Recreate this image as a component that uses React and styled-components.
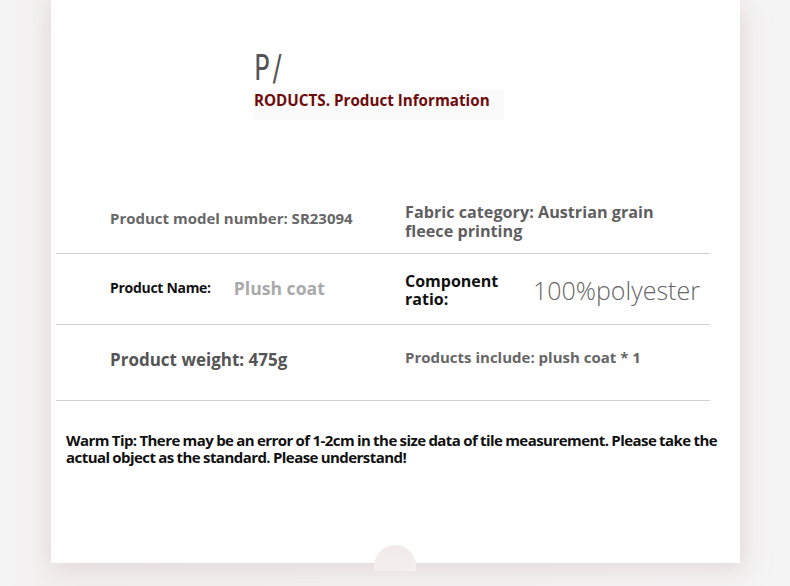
import React from "react";
import styled, { createGlobalStyle } from "styled-components";

const Global = createGlobalStyle`
  html, body { margin: 0; padding: 0; }
  body {
    background: #f4f3f3;
    font-family: "Open Sans", "Liberation Sans", sans-serif;
    width: 790px; height: 586px; overflow: hidden;
  }
`;

const Stage = styled.div`
  width: 790px;
  height: 586px;
  padding-left: 51px;
  box-sizing: border-box;
  background: linear-gradient(90deg, #f4f4f4 0%, #f2efef 6%, #f4f4f4 100%);
`;

const Card = styled.div`
  position: relative;
  width: 689px;
  height: 563px;
  background: #fff;
  box-shadow: 6px 8px 22px rgba(215, 190, 190, 0.35), -4px 0 14px rgba(220, 210, 210, 0.3);
  display: flex;
  flex-direction: column;
  box-sizing: border-box;
  padding-top: 49px;
`;

const Heading = styled.div`
  margin-left: 203px;
  display: flex;
  flex-direction: column;
`;

const Letter = styled.div`
  font-family: "DejaVu Sans Condensed", "Liberation Sans Narrow", sans-serif;
  font-size: 35px;
  line-height: 38px;
  color: #555;
  transform: scaleX(0.82);
  transform-origin: left;
  letter-spacing: 4px;
`;

const Sub = styled.div`
  margin-top: 3px;
  font-weight: 700;
  font-size: 15.2px;
  line-height: 20px;
  color: #6e0b0b;
  background: #fbfafa;
  padding: 0 14px 10px 0;
  align-self: flex-start;
`;

const Table = styled.div`
  margin: 71px 0 0 5px;
  width: 654px;
  display: flex;
  flex-direction: column;
`;

const Row = styled.div`
  box-sizing: border-box;
  display: grid;
  grid-template-columns: 349px 1fr;
  align-items: center;
  height: ${p => p.$h}px;
  border-bottom: 1px solid #d2d2d2;
`;

const Cell = styled.div`
  padding-left: ${p => p.$pl ?? 54}px;
  display: flex;
  align-items: center;
  gap: ${p => p.$gap || 0}px;
  transform: translateY(${p => p.$dy || 0}px);
`;

const Text = styled.span`
  font-weight: ${p => p.$w || 700};
  font-size: ${p => p.$s}px;
  line-height: ${p => p.$lh || 18}px;
  color: ${p => p.$c};
  width: ${p => (p.$width ? p.$width + "px" : "auto")};
  letter-spacing: ${p => p.$ls || 0}px;
`;

const Tip = styled.div`
  margin: 31px 0 0 15px;
  width: 662px;
  font-family: "Open Sans", sans-serif;
  font-weight: 700;
  font-size: 15px;
  line-height: 17px;
  color: #111;
  letter-spacing: -0.55px;
  word-spacing: -0.5px;
`;

const Bump = styled.div`
  position: absolute;
  left: 323px;
  bottom: -8px;
  width: 42px;
  height: 26px;
  border-radius: 21px 21px 0 0;
  background: linear-gradient(#f1eaea, #f4efef);
`;

export default function App() {
  return (
    <>
      <Global />
      <Stage>
        <Card>
          <Heading>
            <Letter>P/</Letter>
            <Sub>RODUCTS. Product Information</Sub>
          </Heading>
          <Table>
            <Row $h={63}>
              <Cell $dy={-4}>
                <Text $s={15} $c="#676767">Product model number: SR23094</Text>
              </Cell>
              <Cell $pl={0} $dy={0}>
                <Text $s={16.2} $lh={19} $c="#5f5f5f" $width={270}>
                  Fabric category: Austrian grain fleece printing
                </Text>
              </Cell>
            </Row>
            <Row $h={71}>
              <Cell $gap={23} $dy={-1}>
                <Text $s={14} $c="#111" $ls={-0.3}>Product Name:</Text>
                <Text $s={17.6} $c="#aaaaaa">Plush coat</Text>
              </Cell>
              <Cell $pl={0} $gap={36} $dy={1}>
                <Text $s={16} $c="#111" $width={92}>Component ratio:</Text>
                <Text $s={25} $w={300} $lh={30} $c="#666">100%polyester</Text>
              </Cell>
            </Row>
            <Row $h={76}>
              <Cell $dy={-3}>
                <Text $s={17} $c="#555">Product weight: 475g</Text>
              </Cell>
              <Cell $pl={0} $dy={-6}>
                <Text $s={15} $c="#666">Products include: plush coat * 1</Text>
              </Cell>
            </Row>
          </Table>
          <Tip>
            Warm Tip: There may be an error of 1-2cm in the size data of tile measurement. Please take the actual object as the standard. Please understand!
          </Tip>
          <Bump />
        </Card>
      </Stage>
    </>
  );
}
